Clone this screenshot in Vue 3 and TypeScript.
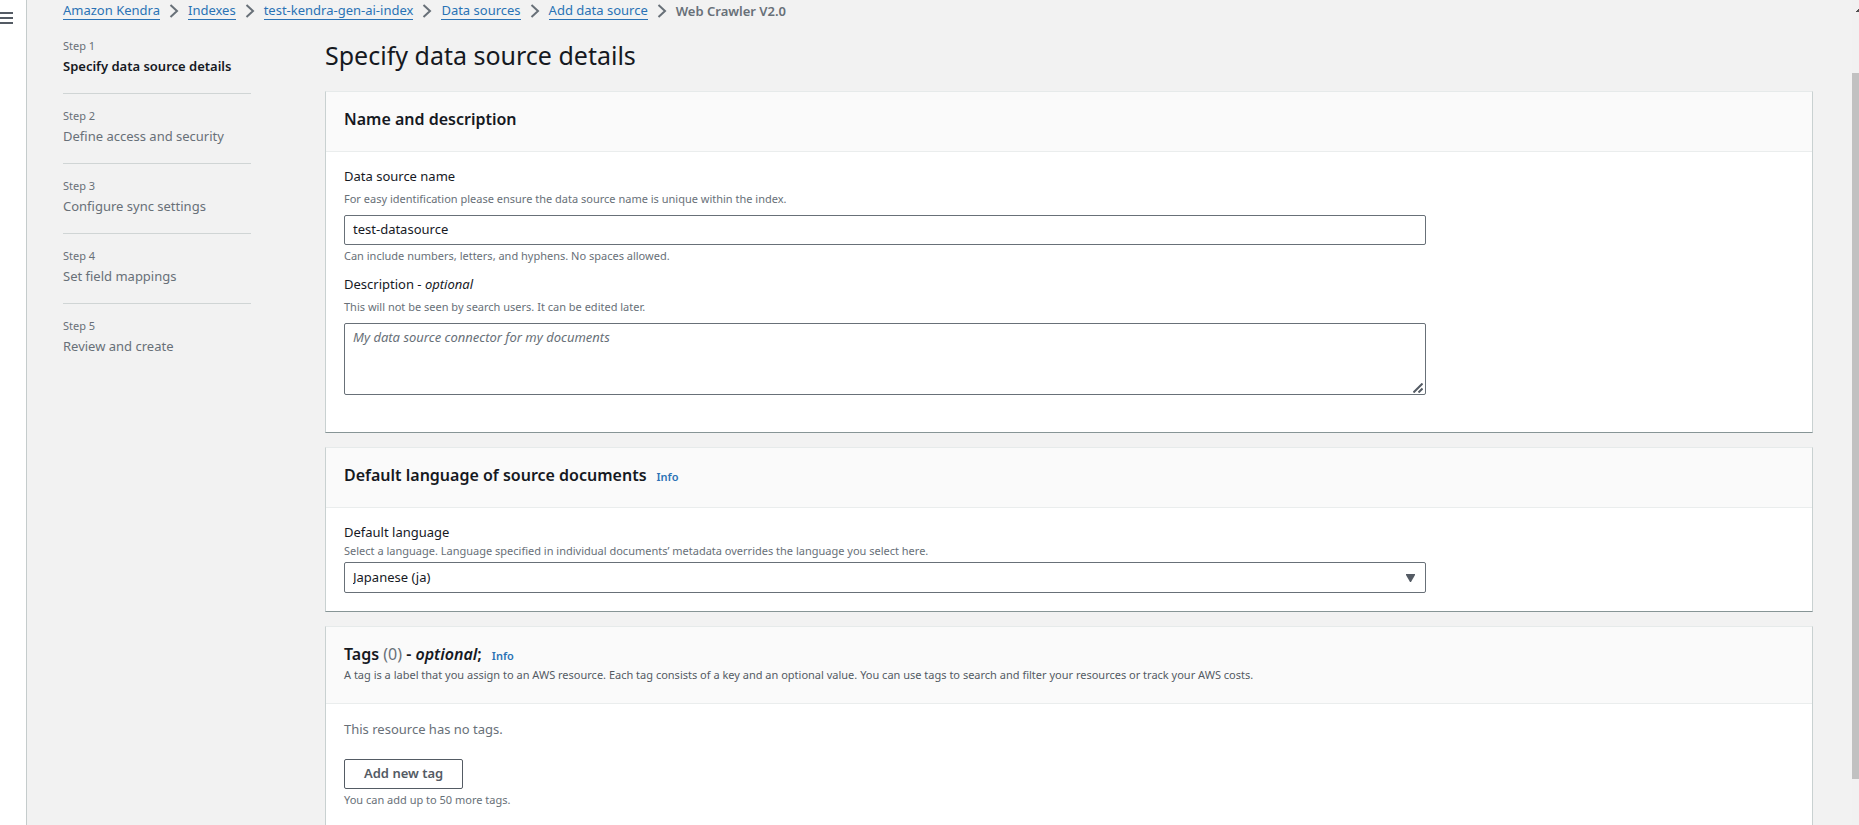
<script setup lang="ts">
import { ref } from 'vue'

interface Step {
  label: string
  title: string
}

const breadcrumbs: string[] = [
  'Amazon Kendra',
  'Indexes',
  'test-kendra-gen-ai-index',
  'Data sources',
  'Add data source',
]
const currentPage = 'Web Crawler V2.0'

const steps: Step[] = [
  { label: 'Step 1', title: 'Specify data source details' },
  { label: 'Step 2', title: 'Define access and security' },
  { label: 'Step 3', title: 'Configure sync settings' },
  { label: 'Step 4', title: 'Set field mappings' },
  { label: 'Step 5', title: 'Review and create' },
]
const activeStep = 0

const name = ref('test-datasource')
const description = ref('')
const language = ref('ja')
</script>

<template>
  <div class="app">
    <div class="rail">
      <button class="menu" type="button" aria-label="Open navigation">
        <svg width="13" height="13" viewBox="0 0 13 13" aria-hidden="true">
          <path d="M0 1h13M0 6h13M0 11h13" fill="none" stroke="#545b64" stroke-width="2" />
        </svg>
      </button>
    </div>

    <div class="page">
      <nav class="breadcrumbs" aria-label="Breadcrumbs">
        <template v-for="crumb in breadcrumbs" :key="crumb">
          <a href="#">{{ crumb }}</a>
          <svg width="10" height="14" viewBox="0 0 10 14" aria-hidden="true">
            <path d="M1.500 1l6.500 6l-6.500 6" fill="none" stroke="#687078" stroke-width="2" />
          </svg>
        </template>
        <span class="current">{{ currentPage }}</span>
      </nav>

      <div class="columns">
        <ol class="steps">
          <li v-for="(step, i) in steps" :key="step.label" :class="{ active: i === activeStep }">
            <span class="step-label">{{ step.label }}</span>
            <span class="step-title">{{ step.title }}</span>
          </li>
        </ol>

        <main class="content">
          <h1>Specify data source details</h1>

          <section class="card">
            <header class="card-header">
              <h2>Name and description</h2>
            </header>
            <div class="card-body details">
              <div class="field">
                <label for="ds-name">Data source name</label>
                <p class="hint spaced">For easy identification please ensure the data source name is unique within the index.</p>
                <input id="ds-name" v-model="name" class="control" type="text" />
                <p class="hint below">Can include numbers, letters, and hyphens. No spaces allowed.</p>
              </div>
              <div class="field">
                <label for="ds-desc">Description - <em>optional</em></label>
                <p class="hint spaced">This will not be seen by search users. It can be edited later.</p>
                <div class="area">
                  <textarea id="ds-desc" v-model="description" class="control" placeholder="My data source connector for my documents"></textarea>
                  <svg class="grip" width="10" height="10" viewBox="0 0 10 10" aria-hidden="true">
                    <path d="M0.500 9.500l9-9M5.500 9.500l4-4" fill="none" stroke="#545b64" stroke-width="2" />
                  </svg>
                </div>
              </div>
            </div>
          </section>

          <section class="card">
            <header class="card-header">
              <h2>Default language of source documents</h2>
              <a class="info" href="#">Info</a>
            </header>
            <div class="card-body">
              <div class="field">
                <label for="ds-lang">Default language</label>
                <p class="hint">Select a language. Language specified in individual documents’ metadata overrides the language you select here.</p>
                <div class="picker">
                  <select id="ds-lang" v-model="language" class="control">
                    <option value="ja">Japanese (ja)</option>
                    <option value="en">English (en)</option>
                  </select>
                  <svg class="caret" width="9" height="8" viewBox="0 0 9 8" aria-hidden="true">
                    <path d="M0 0h9v1l-4 7h-1l-4-7z" fill="#545b64" />
                  </svg>
                </div>
              </div>
            </div>
          </section>

          <section class="card last">
            <header class="card-header">
              <h2>Tags <span class="count">(0)</span> - <em>optional</em>;</h2>
              <a class="info" href="#">Info</a>
              <p class="summary">A tag is a label that you assign to an AWS resource. Each tag consists of a key and an optional value. You can use tags to search and filter your resources or track your AWS costs.</p>
            </header>
            <div class="card-body tags">
              <p class="empty">This resource has no tags.</p>
              <button class="add" type="button">Add new tag</button>
              <p class="hint below">You can add up to 50 more tags.</p>
            </div>
          </section>
        </main>
      </div>
    </div>

    <div class="scrollbar" aria-hidden="true">
      <svg width="7" height="4" viewBox="0 0 7 4">
        <path d="M7 0v3h-3v-1h1v-1h1v-1z" fill="#505050" />
      </svg>
      <div class="thumb"></div>
    </div>
  </div>
</template>

<style>
body {
  margin: 0;
  background: #f2f2f2;
}
</style>

<style scoped>
.app {
  display: flex;
  min-height: 100vh;
  box-sizing: border-box;
  background: #f2f2f2;
  color: #16191f;
  font-family: "Noto Sans", "Open Sans", sans-serif;
  font-size: 13px;
  line-height: 20px;
}

h1,
h2,
p,
ol {
  margin: 0;
  padding: 0;
}

a {
  color: #2a72b5;
}

.rail {
  flex: none;
  width: 26px;
  background: #fff;
  border-right: 1px solid #c5cccc;
}

.menu {
  display: block;
  margin-top: 12px;
  padding: 0;
  border: 0;
  background: none;
}

.menu svg {
  display: block;
}

.page {
  flex: 1;
  min-width: 0;
  display: flex;
  flex-direction: column;
  padding: 0 39px 0 36px;
}

.breadcrumbs {
  display: flex;
  align-items: center;
  gap: 9px;
  height: 22px;
}

.breadcrumbs a {
  line-height: 17px;
  text-decoration: none;
  border-bottom: 1px solid #2a72b5;
}

.current {
  color: #687078;
  font-weight: 600;
}

.columns {
  flex: 1;
  display: flex;
  gap: 74px;
}

.steps {
  flex: none;
  width: 188px;
  padding-top: 14px;
  list-style: none;
  color: #687078;
}

.steps li {
  height: 57px;
  margin-bottom: 12px;
  border-bottom: 1px solid #d0d5d5;
}

.steps li:last-child {
  border-bottom: 0;
}

.step-label,
.step-title {
  display: block;
}

.step-label {
  font-size: 11px;
}

.step-title {
  line-height: 21px;
}

.active .step-title {
  color: #16191f;
  font-weight: 600;
}

.content {
  flex: 1;
  min-width: 0;
  display: flex;
  flex-direction: column;
}

h1 {
  padding: 15px 0 18px;
  font-size: 25px;
  line-height: 36px;
  font-weight: 400;
}

.card {
  margin-bottom: 14px;
  background: #fff;
  border: 1px solid #c9d1d1;
  border-top-color: #e6eaea;
  border-bottom-color: #879596;
}

.card.last {
  flex: 1;
  margin-bottom: 0;
  border-bottom: 0;
}

.card-header {
  display: flex;
  flex-wrap: wrap;
  align-items: baseline;
  column-gap: 10px;
  padding: 15px 18px 20px;
  background: #fafafa;
  border-bottom: 1px solid #eaeded;
}

h2 {
  font-size: 16px;
  line-height: 24px;
  font-weight: 600;
}

.count {
  color: #687078;
  font-weight: 400;
}

.info {
  font-size: 11px;
  line-height: 16px;
  font-weight: 600;
  text-decoration: none;
}

.summary {
  flex-basis: 100%;
  padding-top: 1px;
  color: #545b64;
  font-size: 11px;
  line-height: 16px;
}

.card-body {
  display: grid;
  grid-template-columns: 3fr 1fr;
  gap: 9px 8px;
  padding: 14px 18px 18px;
}

.details {
  padding-bottom: 37px;
}

.field {
  grid-column: 1;
}

label {
  display: block;
}

.hint {
  padding-bottom: 2px;
  color: #687078;
  font-size: 11px;
  line-height: 18px;
}

.hint.spaced {
  padding: 4px 0 7px;
}

.hint.below {
  padding: 2px 0 0;
}

.control {
  display: block;
  box-sizing: border-box;
  width: 100%;
  height: 30px;
  margin: 0;
  padding: 3px 8px 5px;
  border: 1px solid #687078;
  border-radius: 2px;
  background: #fff;
  color: #16191f;
  font: inherit;
}

.area,
.picker {
  position: relative;
}

textarea.control {
  height: 72px;
  resize: none;
}

textarea::placeholder {
  color: #687078;
  font-style: italic;
  opacity: 1;
}

.grip {
  position: absolute;
  right: 3px;
  bottom: 2px;
}

select.control {
  height: 31px;
  appearance: none;
}

.caret {
  position: absolute;
  right: 11px;
  top: 12px;
  pointer-events: none;
}

.tags {
  display: block;
  padding: 15px 18px 12px;
}

.empty {
  color: #687078;
}

.add {
  display: block;
  height: 30px;
  margin-top: 20px;
  padding: 0 19px 2px;
  border: 1px solid #545b64;
  border-radius: 2px;
  background: #fff;
  color: #545b64;
  font: inherit;
  font-weight: 600;
}

.scrollbar {
  flex: none;
  display: flex;
  flex-direction: column;
  gap: 60px;
  box-sizing: border-box;
  width: 7px;
  padding: 9px 0 46px;
  background: #f1f1f1;
}

.thumb {
  flex: 1;
  background: #c1c1c1;
}
</style>
